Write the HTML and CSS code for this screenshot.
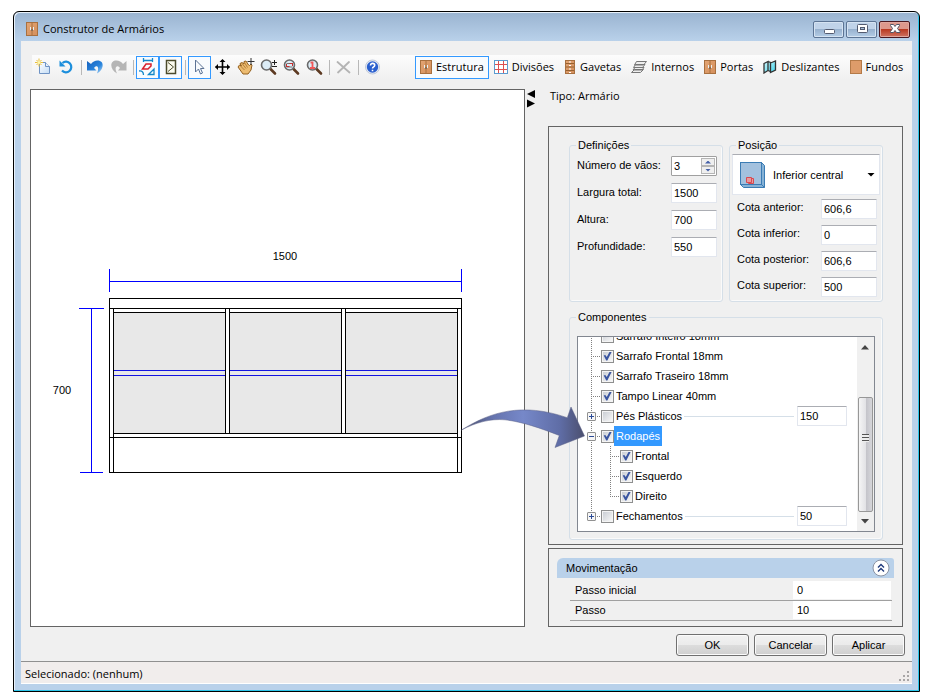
FILE: index.html
```html
<!DOCTYPE html>
<html lang="pt-BR">
<head>
<meta charset="utf-8">
<title>Construtor de Armários</title>
<link rel="stylesheet" href="styles.css">
</head>
<body>
<svg class="defs" width="0" height="0" aria-hidden="true">
  <defs>
    <linearGradient id="wood" x1="0" y1="0" x2="1" y2="1"><stop offset="0" stop-color="#e3a574"/><stop offset="1" stop-color="#d48f5c"/></linearGradient>
    <linearGradient id="glass" x1="0" y1="0" x2="1" y2="1"><stop offset="0" stop-color="#d4f8fd"/><stop offset="1" stop-color="#3cd2ea"/></linearGradient>
    <linearGradient id="page" x1="0" y1="0" x2="1" y2="1"><stop offset="0" stop-color="#fff"/><stop offset="1" stop-color="#c3dcf5"/></linearGradient>
    <linearGradient id="undo" x1="0" y1="0" x2="1" y2="1"><stop offset="0" stop-color="#1560bd"/><stop offset=".6" stop-color="#2b86dd"/><stop offset="1" stop-color="#bfe0f8"/></linearGradient>
    <linearGradient id="swoosh" x1="0" y1="0" x2="1" y2="0"><stop offset="0" stop-color="#4a4e68"/><stop offset=".25" stop-color="#6573ad"/><stop offset=".5" stop-color="#7688c9"/><stop offset=".8" stop-color="#5f6da6"/><stop offset="1" stop-color="#4b4f6e"/></linearGradient>
    <symbol id="cabinet" viewBox="0 0 12 14"><rect x=".5" y=".5" width="11" height="13" fill="url(#wood)" stroke="#a8703f"/><path d="M6 1v12" stroke="#a8703f"/><path d="M4.500 5v3M7.500 5v3" stroke="#e8f0f4"/><path d="M5 8h2" stroke="#555"/></symbol>
    <symbol id="lens" viewBox="0 0 18 18"><path d="M10.500 11l4.500 4.500" stroke="#5d3a22" stroke-width="2.600" stroke-linecap="round"/><circle cx="6.500" cy="7" r="5" fill="#dcecf6" stroke="#6a6a6a" stroke-width="1.600"/></symbol>
  </defs>
</svg>
<div class="window">
  <header class="titlebar">
    <svg class="title-icon" width="12" height="14"><use href="#cabinet"/></svg>
    <h1>Construtor de Armários</h1>
    <div class="caption">
      <button type="button" aria-label="Minimizar"><svg width="14" height="12"><rect x="2.500" y="6.500" width="10" height="4" rx="1" fill="#fff" stroke="#535b70"/></svg></button>
      <button type="button" aria-label="Maximizar"><svg width="14" height="12"><rect x="2.500" y="1.500" width="10" height="8" rx="1" fill="#fff" stroke="#535b70"/><rect x="5.500" y="4.500" width="4" height="2" fill="#a9bfd8" stroke="#535b70"/></svg></button>
      <button type="button" class="close" aria-label="Fechar"><svg width="14" height="12"><path d="M2.500 1.500h3l1.500 2 1.500-2h3v1L9.500 5.500l2.500 3v1H8.500L7 7.500l-1.500 2H2.500v-1L4.500 5.500 2.500 2.500z" fill="#fff" stroke="#535666"/></svg></button>
    </div>
  </header>

  <div class="client">
    <nav class="toolbar">
      <button type="button" class="tool" aria-label="Novo"><svg width="18" height="18"><path d="M4.500 4.500h6l4 4v7h-10z" fill="url(#page)" stroke="#6f93c4"/><path d="M10.500 4.500v4h4" fill="#e8f1fb" stroke="#6f93c4"/><path d="M4 .5v8M0 4.500h8M1.500 2l5 5M6.500 2l-5 5" stroke="#e9bf3c"/><circle cx="4" cy="4.500" r="1.500" fill="#fff6a8"/></svg></button>
      <button type="button" class="tool" aria-label="Atualizar"><svg width="18" height="18"><path d="M4.500 5A5.300 5.300 0 1 1 4 12.500" fill="none" stroke="#1d8fdc" stroke-width="2.200"/><path d="M1.500 2.500v6h6z" fill="#1d8fdc"/></svg></button>
      <i class="sep"></i>
      <button type="button" class="tool" aria-label="Desfazer"><svg width="18" height="18"><path d="M0 3v9.500h9.500L7 10C9.500 6.500 13 8.500 10 15.500c7-3.500 8-13 .5-13C8 2.500 5.500 4 4 6z" fill="url(#undo)"/></svg></button>
      <button type="button" class="tool" aria-label="Refazer"><svg width="18" height="18"><path d="M16.500 3v9.500H8L10 10C7.500 6.500 3.500 8.500 7 15.500c-7-3.500-8-13-.5-13 2.500 0 5 1.500 6.500 3.500z" fill="#b5b5b5"/></svg></button>
      <i class="sep"></i>
      <button type="button" class="tool on" aria-label="Cotas"><svg width="18" height="18" fill="none"><path d="M4.500 0v4M13.500 0v4M4.500 2.500h9" stroke="#1488c8" stroke-width="1.300"/><path d="M3.500 11l3.500-5h5v2l-3 3z" stroke="#d8202c" stroke-width="1.500"/><path d="M0 13c3-.5 4.500 1 4.500 4M9.500 16.500l5.500-5.500v5.500z" stroke="#1488c8" stroke-width="1.300"/></svg></button>
      <button type="button" class="tool on" aria-label="Abertura"><svg width="18" height="18" fill="none"><rect x="4.500" y="2.500" width="9" height="13" fill="#fbfbee" stroke="#4b4b2c" stroke-width="1.500"/><path d="M6 4.500l5.500 4.500L6 13.500" stroke="#4b4b2c"/></svg></button>
      <i class="sep"></i>
      <button type="button" class="tool on" aria-label="Selecionar"><svg width="18" height="18"><path d="M4.500 2v12l3-3 2 5 2-1-2-4.500h3.500z" fill="#f7fafd" stroke="#5c7396"/></svg></button>
      <button type="button" class="tool" aria-label="Mover"><svg width="18" height="18"><path d="M8.500 2v14M1.500 9h14" stroke="#000" stroke-width="1.600"/><path d="M8.500 1l3 3h-6zM8.500 17l3-3h-6zM1 9l3-3v6zM16 9l-3-3v6z"/></svg></button>
      <button type="button" class="tool" aria-label="Arrastar"><svg width="18" height="18"><path d="M1 9l1.500-2 2 1L3 5.500l2-1 2 1.500 0-2.500 2-.5 2.500 4 1 .5 1.500-1.500 1 1-1 5L11 16H6z" fill="#ecbb70" stroke="#94601f"/><path d="M3.500 8l4 4M5 5.500l4 5M7.500 4.500l3 5" stroke="#b5803a"/><path d="M14 0v7M10.500 3.500h7" stroke="#333"/></svg></button>
      <button type="button" class="tool" aria-label="Zoom"><svg width="18" height="18"><use href="#lens"/><path d="M14.500 2v5M12 4.500h5M12 8.500h5" stroke="#222"/></svg></button>
      <button type="button" class="tool" aria-label="Zoom na janela"><svg width="18" height="18"><use href="#lens"/><path d="M3.500 5.500h6M3.500 9h6" stroke="#777"/><path d="M3.500 6v3M9.500 5v3M3.500 8.500h3M6.500 5.500h3" stroke="#c62f2f"/></svg></button>
      <button type="button" class="tool" aria-label="Zoom total"><svg width="18" height="18"><use href="#lens"/><path d="M4.500 4.500h2v6M4 10h5" fill="none" stroke="#f05858" stroke-width="1.800"/></svg></button>
      <i class="sep"></i>
      <button type="button" class="tool" aria-label="Excluir"><svg width="18" height="18"><path d="M2.500 4l12 10.500M14 4L3 14.500" stroke="#b4b4b4" stroke-width="1.800" stroke-linecap="round"/></svg></button>
      <i class="sep"></i>
      <button type="button" class="tool" aria-label="Ajuda"><svg width="18" height="18"><circle cx="8.500" cy="9" r="7" fill="#e6ebf4" stroke="#c0c9da"/><circle cx="8.500" cy="9" r="5.700" fill="#2a5fce"/><path d="M6.500 7.500c0-3 4.200-2.600 4.200-.2C10.700 9 8.500 8.800 8.500 10.500M8.500 11.700v1.600" fill="none" stroke="#fff" stroke-width="1.600"/></svg></button>
      <div class="tabs">
        <button type="button" class="tab on"><svg width="12" height="14"><use href="#cabinet"/></svg>Estrutura</button>
        <button type="button" class="tab"><svg width="14" height="14" fill="none"><rect x=".5" y=".5" width="13" height="13" fill="#fff" stroke="#5b9bd0"/><path d="M4.500 1v12M9.500 1v12M1 4.500h12M1 9.500h12" stroke="#dc5050"/></svg>Divisões</button>
        <button type="button" class="tab"><svg width="12" height="14"><rect x="1.500" y=".5" width="9" height="13" fill="url(#wood)" stroke="#a8703f"/><path d="M2 3.500h8M2 7h8M2 10.500h8" stroke="#96602f"/><path d="M5 2h2M5 5.500h2M5 9h2M5 12.500h2" stroke="#fff"/></svg>Gavetas</button>
        <button type="button" class="tab"><svg width="16" height="14" fill="#eee" stroke="#777"><path d="M3.500 9.500h9l-3 3h-9zM4 7.500h9l-2 2.500H2zM4.500 4.500h9.500l-2.500 3H2.500zM5.500 1.500h10l-3 3.500H3.500z"/></svg>Internos</button>
        <button type="button" class="tab"><svg width="12" height="14"><use href="#cabinet"/></svg>Portas</button>
        <button type="button" class="tab"><svg width="14" height="14"><path d="M1 3.500L5 1.500v9L1 13zM5 1.500l2.500 1v9L5 10.500M7.500 3L12.500 1v9l-5 2.500z" fill="url(#glass)" stroke="#333" stroke-width="1.300"/></svg>Deslizantes</button>
        <button type="button" class="tab"><svg width="12" height="14"><rect x=".5" y=".5" width="11" height="13" fill="#de9c6a" stroke="#b47a48"/></svg>Fundos</button>
      </div>
    </nav>

    <main class="workspace">
      <section class="canvas" aria-label="Vista frontal">
        <svg viewBox="31 90 493 536" shape-rendering="crispEdges" fill="none" stroke="#000">
          <g fill="#e8e8e8" stroke="none"><path d="M113 312h112v121H113zM229 312h112v121H229zM345 312h112v121H345z"/></g>
          <path stroke="#00f" d="M109.500 269v23M461.500 269v23M109 281.500h353M79 308.500h25M80 472.500h23M91.500 308v165"/>
          <path stroke="#1414e0" d="M113 370.500h112M113 375.500h112M229 370.500h112M229 375.500h112M345 370.500h112M345 375.500h112"/>
          <path d="M109.500 298.500h352v174h-352zM109 308.500h353M109 437.500h353M113.500 308v165M457.500 308v165M225.500 308v126M229.500 308v126M341.500 308v126M345.500 308v126M113 312.500h112M229 312.500h112M345 312.500h112M113 433.500h345"/>
          <g class="dimension"><text x="285" y="260">1500</text><text x="62" y="394">700</text></g>
        </svg>
      </section>

      <div class="splitter"><svg width="10" height="18"><path d="M9 0v8L1 4zM1 9.500v8l8-4z"/></svg></div>

      <aside class="side">
        <p class="kind">Tipo: Armário</p>
        <section class="panel properties">
          <fieldset class="group definitions">
            <legend>Definições</legend>
            <label for="vaos">Número de vãos:</label>
            <span class="spinner"><input id="vaos" type="number" value="3"><span class="steps"><button type="button" class="up" aria-label="Aumentar"></button><button type="button" class="down" aria-label="Diminuir"></button></span></span>
            <label for="largura">Largura total:</label><input id="largura" class="box" type="text" value="1500">
            <label for="altura">Altura:</label><input id="altura" class="box" type="text" value="700">
            <label for="prof">Profundidade:</label><input id="prof" class="box" type="text" value="550">
          </fieldset>
          <fieldset class="group position">
            <legend>Posição</legend>
            <div class="picker">
              <svg width="26" height="28"><path d="M1.500 1.500h21l3 3v22h-21l-3-3z" fill="#86b2d6" stroke="#3b7cb4"/><rect x="1.500" y="1.500" width="21" height="22" fill="#a3c1de" stroke="#3b7cb4"/><path d="M22.500 23.500l3 3" stroke="#3b7cb4"/><path d="M9.500 17.500h5v5h-5z" fill="#e89a9f" stroke="#d84a50"/><path d="M7.500 16.500h5v5h-5z" fill="#e89a9f" stroke="#d84a50"/></svg>
              <select aria-label="Posição"><option>Inferior central</option></select>
            </div>
            <div class="offsets">
              <label for="ca">Cota anterior:</label><input id="ca" class="box" type="text" value="606,6">
              <label for="ci">Cota inferior:</label><input id="ci" class="box" type="text" value="0">
              <label for="cp">Cota posterior:</label><input id="cp" class="box" type="text" value="606,6">
              <label for="cs">Cota superior:</label><input id="cs" class="box" type="text" value="500">
            </div>
          </fieldset>
          <div class="components">
            <fieldset class="group">
              <legend>Componentes</legend>
              <div class="tree">
                <ul>
                  <li><i class="guide branch"></i><input type="checkbox" id="t0"><label for="t0">Sarrafo Inteiro 18mm</label></li>
                  <li><i class="guide branch"></i><input type="checkbox" id="t1" checked><label for="t1">Sarrafo Frontal 18mm</label></li>
                  <li><i class="guide branch"></i><input type="checkbox" id="t2" checked><label for="t2">Sarrafo Traseiro 18mm</label></li>
                  <li><i class="guide branch"></i><input type="checkbox" id="t3" checked><label for="t3">Tampo Linear 40mm</label></li>
                  <li><i class="guide branch"><button type="button" class="expander plus" aria-label="Expandir"></button></i><input type="checkbox" id="t4"><label for="t4">Pés Plásticos</label><i class="rule"></i><input class="box" type="text" value="150" aria-label="Pés Plásticos"></li>
                  <li><i class="guide branch"><button type="button" class="expander" aria-label="Recolher"></button></i><input type="checkbox" id="t5" checked><label for="t5" class="selected">Rodapés</label></li>
                  <li><i class="guide"></i><i class="guide branch"></i><input type="checkbox" id="t6" checked><label for="t6">Frontal</label></li>
                  <li><i class="guide"></i><i class="guide branch"></i><input type="checkbox" id="t7" checked><label for="t7">Esquerdo</label></li>
                  <li><i class="guide"></i><i class="guide branch last"></i><input type="checkbox" id="t8" checked><label for="t8">Direito</label></li>
                  <li><i class="guide branch last"><button type="button" class="expander plus" aria-label="Expandir"></button></i><input type="checkbox" id="t9"><label for="t9">Fechamentos</label><i class="rule"></i><input class="box" type="text" value="50" aria-label="Fechamentos"></li>
                </ul>
                <div class="scrollbar">
                  <svg width="8" height="5"><path d="M4 0l4 4.500H0z" fill="#444"/></svg>
                  <div class="thumb"><i></i></div>
                  <svg width="8" height="5"><path d="M4 4.500L0 0h8z" fill="#444"/></svg>
                </div>
              </div>
            </fieldset>
            <svg class="callout" width="128" height="45" viewBox="460 405 128 45"><path d="M461.500 430C490 412 522 402 567.300 417.700L571 407 584.500 436 555 447.500 559.300 435.500C540 428 523 422 505 419.800 490 418.500 476 422.500 461.500 430z" fill="url(#swoosh)" stroke="#5a6186" stroke-width=".5"/></svg>
          </div>
        </section>
        <section class="panel movement">
          <h2>Movimentação<button type="button" aria-label="Recolher"><svg width="18" height="18" fill="none"><circle cx="9" cy="9" r="8" fill="#fff" stroke="#8b93a3"/><path d="M6 8.500l3-3 3 3M6 12.500l3-3 3 3" stroke="#1f3a7c" stroke-width="1.400"/></svg></button></h2>
          <div class="step"><label for="p0">Passo inicial</label><input id="p0" type="text" value="0"></div>
          <div class="step"><label for="p1">Passo</label><input id="p1" type="text" value="10"></div>
        </section>
      </aside>
    </main>

    <div class="actions">
      <button type="button">OK</button>
      <button type="button">Cancelar</button>
      <button type="button">Aplicar</button>
    </div>
    <footer class="status">Selecionado: (nenhum)<svg width="11" height="11" fill="#a9a6a6"><path d="M8 0h2v2H8zM8 4h2v2H8zM4 4h2v2H4zM8 8h2v2H8zM4 8h2v2H4zM0 8h2v2H0z"/></svg></footer>
  </div>
</div>
</body>
</html>
```
FILE: styles.css
```css
* { box-sizing: border-box; }
body {
  margin: 0;
  min-height: 100vh;
  padding: 11px 23px 7px 13px;
  display: flex;
  background: #fff;
  color: #000;
  font: 11px/14px "Liberation Sans", sans-serif;
}
button, input, select { margin: 0; font: inherit; color: inherit; }
button { padding: 0; border: 0; background: none; }
svg { display: block; flex: none; }
h1, h2, p, ul { margin: 0; padding: 0; font-weight: normal; }
.defs { position: absolute; }

.window {
  flex: 1;
  min-width: 0;
  display: flex;
  flex-direction: column;
  padding: 0 7px 7px;
  border: 1px solid #000;
  border-radius: 6px 6px 0 0;
  background: linear-gradient(#99b3d0, #b9d1ea 29px);
  box-shadow: inset -1px -1px #2cc6ea, inset 1px 1px #e8f1fa;
}
.titlebar {
  height: 29px;
  display: flex;
  align-items: center;
  padding: 5px 2px 0 5px;
  gap: 5px;
}
h1, .tab, .kind, .status { font-family: "Open Sans", sans-serif; font-size: 11px; line-height: 16px; }
h1 { flex: 1; }
.caption { display: flex; gap: 2px; }
.caption button {
  width: 31px;
  height: 17px;
  display: grid;
  place-items: center;
  border: 1px solid #5c7494;
  border-radius: 2px;
  box-shadow: inset 0 0 0 1px #d5e3f2;
  background: linear-gradient(#c0d3e9 50%, #98b2cf 50%, #b4cde6);
}
.caption .close {
  border-color: #4a1820;
  box-shadow: inset 0 0 0 1px #e0a79e;
  background: linear-gradient(#dd988c 50%, #b93a22 50%, #cf7463);
}

.client { flex: 1; display: flex; flex-direction: column; background: #f0f0f0; }
.toolbar {
  height: 24px;
  margin: 14px 0 10px 11px;
  display: flex;
  align-items: center;
  background: linear-gradient(#fcfcfc, #f0f0f0);
}
.tool {
  width: 23px;
  height: 23px;
  display: grid;
  place-items: center;
  flex: none;
}
.tool.on, .tab.on { border: 1px solid #3399ff; background: #f8fbfe; }
.sep { width: 6px; height: 15px; flex: none; background: linear-gradient(#b8b8b8, #b8b8b8) 3px 0 / 1px 100% no-repeat; }
.tabs { display: flex; margin-left: 31px; }
.tab {
  height: 23px;
  display: flex;
  align-items: center;
  gap: 4px;
  padding: 0 4px;
  border: 1px solid transparent;
  white-space: nowrap;
}

.workspace {
  flex: 1;
  display: grid;
  grid-template-columns: minmax(0, 1fr) 23px 355px;
  padding: 0 9px;
}
.canvas { border: 1px solid #646464; background: #fff; }
.canvas svg { width: 100%; height: 0; min-height: 100%; }
.dimension { fill: #000; stroke: none; font-size: 11px; text-anchor: middle; }
.splitter { padding: 1px 0 0 1px; }
.side { display: flex; flex-direction: column; }
.kind { height: 37px; padding-left: 2px; line-height: 14px; }
.panel { border: 1px solid #646464; }

.properties {
  flex: 1;
  display: grid;
  grid-template-columns: 1fr 1fr;
  gap: 8px 6px;
  align-content: start;
  padding: 11px 19px 4px 20px;
  margin-bottom: 3px;
}
.group {
  min-width: 0;
  margin: 0;
  border: 1px solid #d5dfe8;
  border-radius: 3px;
  box-shadow: inset -1px -1px #fafafa;
}
legend { padding: 0 2px; margin-left: -1px; line-height: 14px; }
.definitions, .offsets {
  display: grid;
  grid-template-columns: 1fr 46px;
  grid-auto-rows: 20px;
  align-content: start;
  row-gap: 7px;
  line-height: 17px;
}
.definitions { padding: 4px 5px 0 7px; line-height: 19px; }
.definitions label, .offsets label { white-space: nowrap; }
.position { padding: 2px; }
.offsets { grid-template-columns: 1fr 56px; row-gap: 6px; padding: 4px 3px 2px 5px; }
.position legend { margin-left: 4px; }
.box, .spinner {
  width: 100%;
  height: 20px;
  padding: 0 2px;
  border: 1px solid #e2e6ee;
  border-top-color: #abadb3;
  border-radius: 1px;
  background: #fff;
  outline: 0;
}
.spinner { display: flex; padding: 1px; border-color: #a0a0a0; }
.spinner input { width: 0; flex: 1; padding: 0 1px; border: 0; background: none; appearance: textfield; outline: 0; }
.spinner input::-webkit-inner-spin-button { appearance: none; }
.steps { width: 14px; display: grid; grid-template-rows: 1fr 1fr; }
.steps button { display: grid; place-items: center; border: 1px solid #b5b5b5; background: #efefef; }
.steps button::before { content: ""; width: 6px; height: 3px; background: #4560a8; clip-path: polygon(50% 0, 100% 100%, 0 100%); }
.steps .down::before { clip-path: polygon(0 0, 100% 0, 50% 100%); }

.picker {
  height: 41px;
  display: grid;
  align-items: center;
  border: 1px solid #e2e6ee;
  border-top-color: #abadb3;
  background: #fff;
}
.picker > * { grid-area: 1 / 1; }
.picker > svg { margin-left: 6px; }
.picker::after {
  content: "";
  grid-area: 1 / 1;
  justify-self: end;
  margin-right: 4px;
  width: 8px;
  height: 4px;
  background: #000;
  clip-path: polygon(0 0, 100% 0, 50% 100%);
}
.picker select { appearance: none; width: 100%; height: 100%; padding: 0 14px 0 40px; border: 0; background: none; outline: 0; }

.components { grid-column: 1 / -1; position: relative; }
.components .group { padding: 12px 7px 7px; }
.callout { position: absolute; left: -109px; top: 95px; }
.tree { height: 196px; display: flex; border: 1px solid #828790; background: #fff; overflow: hidden; }
.tree ul { flex: 1; margin-top: -11px; padding: 0 10px 0 4px; list-style: none; }
.tree li { height: 20px; display: flex; align-items: center; }
.tree label { padding: 0 2px; line-height: 20px; white-space: nowrap; }
.tree .selected { background: #3399ff; color: #fff; }
.guide {
  width: 19px;
  height: 20px;
  flex: none;
  display: flex;
  align-items: center;
  background: repeating-linear-gradient(#808080 0 1px, transparent 1px 2px) 9px 0 / 1px 100% no-repeat;
}
.guide.branch {
  background:
    repeating-linear-gradient(#808080 0 1px, transparent 1px 2px) 9px 0 / 1px 100% no-repeat,
    repeating-linear-gradient(90deg, #808080 0 1px, transparent 1px 2px) 9px 10px / 9px 1px no-repeat;
}
.guide.last { background-size: 1px 10px, 9px 1px; }
.expander {
  width: 9px;
  height: 9px;
  margin-left: 5px;
  border: 1px solid #919191;
  border-radius: 1px;
  background: linear-gradient(#2b4a96, #2b4a96) center / 5px 1px no-repeat, #f6f6f6;
}
.expander.plus {
  background:
    linear-gradient(#2b4a96, #2b4a96) center / 5px 1px no-repeat,
    linear-gradient(#2b4a96, #2b4a96) center / 1px 5px no-repeat,
    #f6f6f6;
}
input[type="checkbox"] {
  appearance: none;
  flex: none;
  width: 13px;
  height: 13px;
  padding: 1px;
  border: 1px solid #8e8f8f;
  background: linear-gradient(135deg, #cbcfd5, #f6f6f6) content-box, #f4f4f4;
}
input[type="checkbox"]:checked::before {
  content: "";
  display: block;
  height: 9px;
  background: #3a55a0;
  clip-path: polygon(8% 45%, 25% 38%, 42% 62%, 75% 0, 98% 0, 48% 100%, 36% 100%);
}
.rule { flex: 1; height: 1px; margin-right: 3px; background: #d5dfe8; }
.tree .box { width: 50px; }
.scrollbar {
  width: 17px;
  display: flex;
  flex-direction: column;
  align-items: center;
  padding: 8px 1px 7px 0;
  background: #f0f0f0;
}
.thumb {
  width: 15px;
  height: 115px;
  margin: auto 0 7px;
  display: grid;
  place-items: center;
  border: 1px solid #979797;
  border-radius: 2px;
  background: linear-gradient(90deg, #f5f5f5, #e3e3e6 50%, #c4c4ca 55%, #d6d6da);
}
.thumb i { width: 7px; height: 8px; margin-bottom: 34px; background: repeating-linear-gradient(#555 0 1px, #eee 1px 3px); }

.movement { padding: 9px 8px 5px; }
.movement h2 {
  height: 20px;
  display: flex;
  align-items: center;
  justify-content: space-between;
  padding: 0 4px 0 9px;
  margin-bottom: 3px;
  border-radius: 6px 3px 0 0;
  background: #b9d1ea;
  font-size: 11px;
}
.step {
  height: 20px;
  display: flex;
  align-items: center;
  margin: 0 2px 0 13px;
  padding: 0 1px 1px 5px;
  border-bottom: 1px solid #a0a0a0;
}
.step label { flex: 1; }
.step input { width: 98px; height: 18px; padding: 0 4px; border: 0; background: #fff; outline: 0; }

.actions { display: flex; justify-content: flex-end; gap: 5px; padding: 7px 7px 5px; }
.actions button {
  width: 73px;
  height: 22px;
  border: 1px solid #707070;
  border-radius: 3px;
  box-shadow: inset 0 0 0 1px #fbfbfb;
  background: linear-gradient(#f2f2f2, #ebebeb 50%, #ddd 50%, #cfcfcf);
}
.status {
  height: 23px;
  display: flex;
  align-items: center;
  justify-content: space-between;
  padding: 2px 2px 0 4px;
  border-top: 1px solid #909090;
  border-bottom: 1px solid #fff;
  background: #f1edec;
}
.status svg { align-self: flex-end; margin-bottom: 1px; }
```
